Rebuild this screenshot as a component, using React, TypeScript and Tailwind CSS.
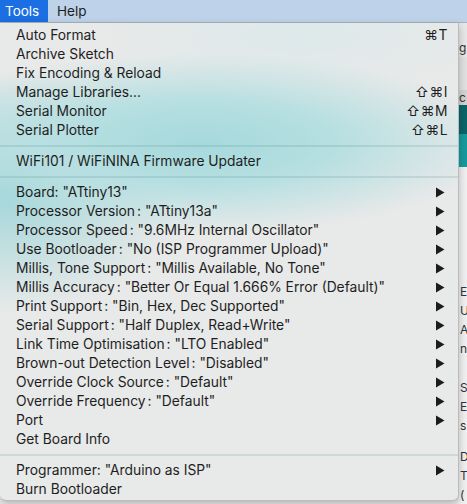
import React from "react";

type Item =
  | { kind: "sep" }
  | { kind: "item"; label: string; value?: string; shortcut?: string; sub?: boolean };

const items: Item[] = [
  { kind: "item", label: "Auto Format", shortcut: "⌘T" },
  { kind: "item", label: "Archive Sketch" },
  { kind: "item", label: "Fix Encoding & Reload" },
  { kind: "item", label: "Manage Libraries...", shortcut: "⇧⌘I" },
  { kind: "item", label: "Serial Monitor", shortcut: "⇧⌘M" },
  { kind: "item", label: "Serial Plotter", shortcut: "⇧⌘L" },
  { kind: "sep" },
  { kind: "item", label: "WiFi101 / WiFiNINA Firmware Updater" },
  { kind: "sep" },
  { kind: "item", label: "Board: \"ATtiny13\"", sub: true },
  { kind: "item", label: "Processor Version", value: "\"ATtiny13a\"", sub: true },
  { kind: "item", label: "Processor Speed", value: "\"9.6MHz Internal Oscillator\"", sub: true },
  { kind: "item", label: "Use Bootloader", value: "\"No (ISP Programmer Upload)\"", sub: true },
  { kind: "item", label: "Millis, Tone Support", value: "\"Millis Available, No Tone\"", sub: true },
  { kind: "item", label: "Millis Accuracy", value: "\"Better Or Equal 1.666% Error (Default)\"", sub: true },
  { kind: "item", label: "Print Support", value: "\"Bin, Hex, Dec Supported\"", sub: true },
  { kind: "item", label: "Serial Support", value: "\"Half Duplex, Read+Write\"", sub: true },
  { kind: "item", label: "Link Time Optimisation", value: "\"LTO Enabled\"", sub: true },
  { kind: "item", label: "Brown-out Detection Level", value: "\"Disabled\"", sub: true },
  { kind: "item", label: "Override Clock Source", value: "\"Default\"", sub: true },
  { kind: "item", label: "Override Frequency", value: "\"Default\"", sub: true },
  { kind: "item", label: "Port", sub: true },
  { kind: "item", label: "Get Board Info" },
  { kind: "sep" },
  { kind: "item", label: "Programmer: \"Arduino as ISP\"", sub: true },
  { kind: "item", label: "Burn Bootloader" },
];

function Arrow() {
  return (
    <svg width="10" height="11" viewBox="0 0 10 11" className="block">
      <path d="M1 0.5 L9.5 5.5 L1 10.5 Z" fill="#1c1c1c" />
    </svg>
  );
}

export default function App() {
  return (
    <div
      className="relative w-[467px] h-[504px] overflow-hidden bg-[#eeeeee] text-[#1e1e1e]"
      style={{ fontFamily: "Inter, 'Noto Sans', sans-serif" }}
    >
      {/* menu bar */}
      <div className="flex h-[23px] items-stretch bg-[#bed3e9] border-b border-[#a9b4bf] text-[13.5px]">
        <div className="flex w-[48px] items-center bg-[#1b6fe2] pl-[5px] text-white">Tools</div>
        <div className="flex items-center pl-[9px] text-[#1d1d1d]">Help</div>
      </div>

      {/* background window strip at right */}
      <div className="absolute right-0 top-[23px] w-[8px] h-[481px] flex flex-col bg-[#f1f1f1] text-[12px] leading-[18px] text-[#333] overflow-hidden">
        <div className="h-[17px] bg-[#e8e8e8]" />
        <div className="h-[18px] bg-[#e8e8e8]">g</div>
        <div className="h-[35px] bg-[#e2e2e2]" />
        <div className="h-[15px] bg-[#d4d4d4] leading-[15px]">c</div>
        <div className="h-[32px] bg-[#0b6568]" />
        <div className="h-[35px] bg-[#179b9e]" />
        <div className="h-[123px]" />
        <div className="pl-[1px] flex flex-col leading-[19px]">
          <span>E</span>
          <span>U</span>
          <span>A</span>
          <span>n</span>
          <span className="mt-[20px]">S</span>
          <span>E</span>
          <span>s</span>
          <span className="mt-[12px]">D</span>
          <span>T</span>
          <span>(</span>
        </div>
      </div>

      {/* dropdown menu */}
      <div className="absolute left-0 top-[23px] w-[459px] h-[478px] rounded-b-[6px] border-r border-b border-[#b9bcbd] shadow-[0_3px_8px_rgba(0,0,0,0.25)] overflow-hidden bg-[#e8e9e9] bg-[radial-gradient(ellipse_300px_90px_at_200px_120px,#a6d9dc_0%,#b6dfe1_45%,rgba(232,233,233,0)_100%),radial-gradient(ellipse_170px_120px_at_10px_170px,#a2d6d9_0%,rgba(232,233,233,0)_100%),radial-gradient(ellipse_200px_50px_at_300px_15px,#dde9ea_0%,rgba(232,233,233,0)_100%)]">
        <div className="flex flex-col pt-[3px] text-[13.8px] leading-[19px]">
          {items.map((it, i) =>
            it.kind === "sep" ? (
              <div key={i} className="my-[5px] h-[2px] bg-[rgba(60,110,115,0.14)]" />
            ) : (
              <div
                key={i}
                className={
                  it.shortcut
                    ? "flex h-[19px] items-center pl-[16px] pr-[10px]"
                    : "flex h-[19px] items-center pl-[16px] pr-[13px]"
                }
              >
                <span className="flex-1 whitespace-nowrap">
                  {it.label}
                  {it.value && (
                    <>
                      <span className="ml-[2px]">:</span> {it.value}
                    </>
                  )}
                </span>
                {it.shortcut && <span className="tracking-[0.5px]">{it.shortcut}</span>}
                {it.sub && <Arrow />}
              </div>
            )
          )}
        </div>
      </div>
    </div>
  );
}
